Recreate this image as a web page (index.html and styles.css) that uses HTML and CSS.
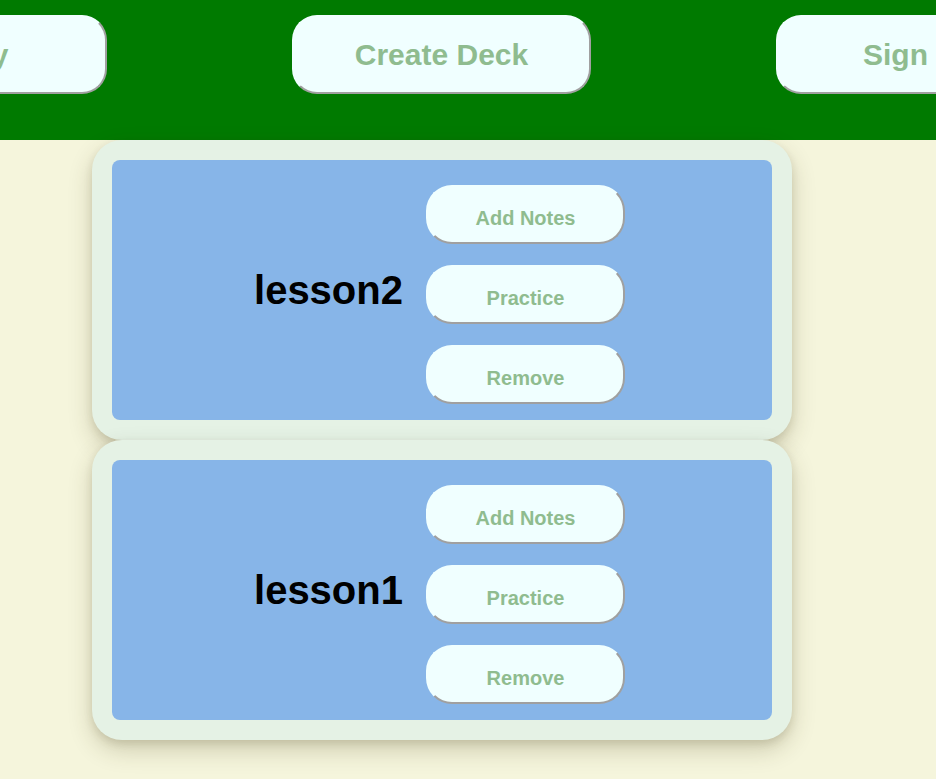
FILE: index.html
```html
<!DOCTYPE html>
<html>
<head>
<meta charset="utf-8">
<link rel="stylesheet" href="styles.css">
</head>
<body>
<header class="topbar">
  <nav class="nav">
    <button class="nav-btn">Library</button>
    <button class="nav-btn">Create Deck</button>
    <button class="nav-btn">Sign Out</button>
  </nav>
</header>
<main class="decks">
  <section class="deck">
    <div class="deck-inner">
      <h2 class="deck-name">lesson2</h2>
      <div class="deck-actions">
        <button class="deck-btn">Add Notes</button>
        <button class="deck-btn">Practice</button>
        <button class="deck-btn">Remove</button>
      </div>
    </div>
  </section>
  <section class="deck">
    <div class="deck-inner">
      <h2 class="deck-name">lesson1</h2>
      <div class="deck-actions">
        <button class="deck-btn">Add Notes</button>
        <button class="deck-btn">Practice</button>
        <button class="deck-btn">Remove</button>
      </div>
    </div>
  </section>
</main>
</body>
</html>
```
FILE: styles.css
```css
html, body {
  margin: 0;
  padding: 0;
}
body {
  background: #f5f5dc;
  font-family: "Liberation Sans", Arial, sans-serif;
  overflow: hidden;
  height: 779px;
}
.topbar {
  background: #007a00;
  height: 140px;
  box-sizing: border-box;
  padding: 15px 53px 0 0;
}
.nav {
  display: flex;
  justify-content: center;
  gap: 185px;
}
.nav-btn {
  flex: none;
  width: 299px;
  height: 79px;
  box-sizing: border-box;
  background: #f0ffff;
  border: 2px solid;
  border-color: #f0ffff #a0a0a0 #a0a0a0 #f0ffff;
  border-radius: 25px;
  color: #8fbc8f;
  font-family: "Liberation Sans", Arial, sans-serif;
  font-weight: bold;
  font-size: 30px;
  padding: 0;
}
.decks {
  display: flex;
  flex-direction: column;
  align-items: center;
  padding-right: 52px;
}
.deck {
  width: 700px;
  box-sizing: border-box;
  padding: 20px;
  background: #e5f2e5;
  border-radius: 30px;
  box-shadow: 0 10px 24px rgba(60, 50, 10, 0.2), 0 4px 8px rgba(60, 50, 10, 0.12);
}
.deck-inner {
  height: 260px;
  background: #87b5e8;
  border-radius: 8px;
  display: flex;
  align-items: center;
  justify-content: center;
  gap: 23px;
  padding-right: 5px;
}
.deck-name {
  margin: 0;
  font-size: 40px;
  font-weight: bold;
  color: #000;
}
.deck-actions {
  display: flex;
  flex-direction: column;
  gap: 21px;
  margin-top: 8px;
}
.deck-btn {
  width: 199px;
  height: 59px;
  box-sizing: border-box;
  background: #f0ffff;
  border: 2px solid;
  border-color: #f0ffff #a0a0a0 #a0a0a0 #f0ffff;
  border-radius: 26px;
  color: #8fbc8f;
  font-family: "Liberation Sans", Arial, sans-serif;
  font-weight: bold;
  font-size: 20px;
  padding: 8px 0 0 0;
}
```
